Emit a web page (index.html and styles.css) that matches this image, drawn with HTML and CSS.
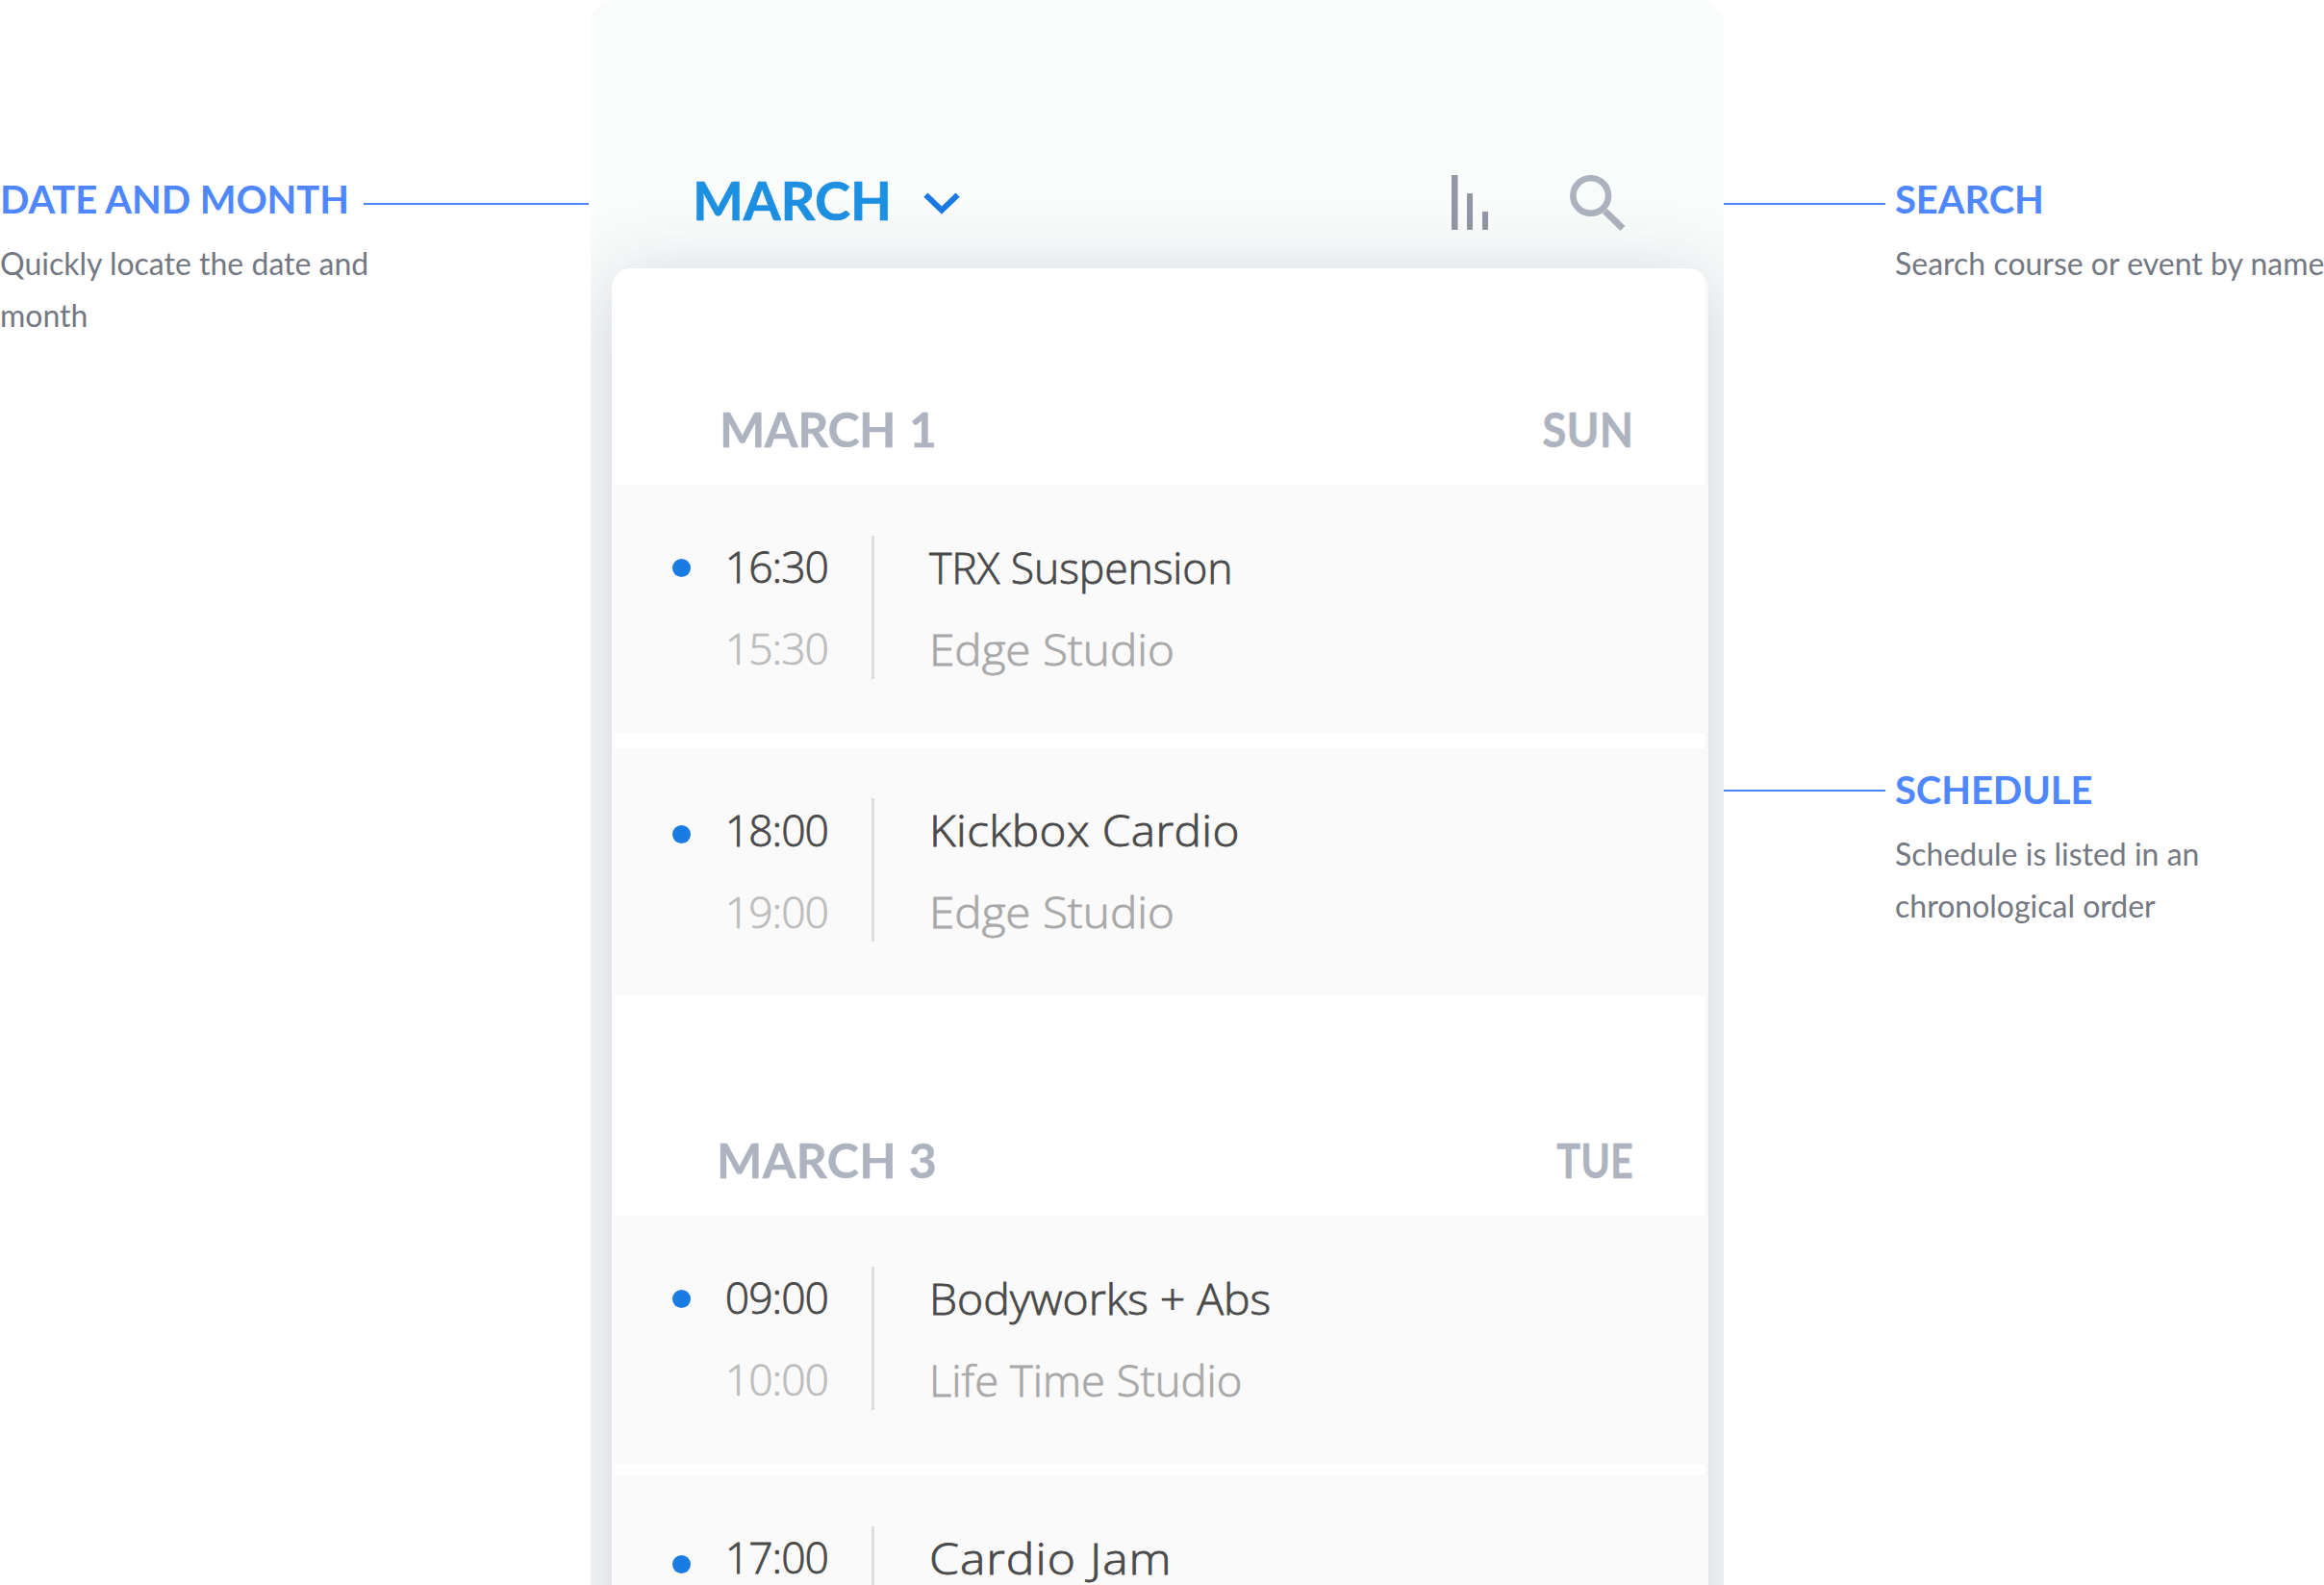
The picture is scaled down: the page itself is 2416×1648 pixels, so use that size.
FILE: index.html
```html
<!DOCTYPE html>
<html lang="en">
<head>
<meta charset="utf-8">
<title>Schedule</title>
<link rel="stylesheet" href="styles.css">
</head>
<body>
<main class="board">
  <aside class="notes notes-left">
    <section class="note">
      <div class="note-head"><h2 class="note-title">DATE AND MONTH</h2><span class="leader"></span></div>
      <p class="note-text">Quickly locate the date and month</p>
    </section>
  </aside>

  <div class="phone">
    <header class="topbar">
      <h1 class="month">MARCH</h1>
      <svg class="chevron" width="38" height="24" viewBox="0 0 38 24"><path d="M2.4 2.6 19 18.6 35.6 2.6" fill="none" stroke="#1b7ae2" stroke-width="6"/></svg>
      <svg class="bars" width="38" height="57" viewBox="0 0 38 57" fill="#9298a4"><path d="M0 0h6.5v57H0zM16 19h6v38h-6zM32 38h6v19h-6z"/></svg>
      <svg class="search" width="58" height="58" viewBox="0 0 58 58" fill="none" stroke="#acb3be"><circle cx="21.7" cy="21.5" r="18.3" stroke-width="6.6"/><path d="M36.5 37.5 55 55.5" stroke-width="7"/></svg>
    </header>

    <div class="card">
      <section class="day">
        <div class="day-head"><h3 class="day-date d1">MARCH 1</h3><span class="day-name sun">SUN</span></div>
        <div class="slots">
          <article class="slot">
            <i class="dot"></i>
            <div class="times"><span>16:30</span><span class="end">15:30</span></div>
            <i class="rule"></i>
            <div class="info"><span class="trx">TRX Suspension</span><span class="place edge">Edge Studio</span></div>
          </article>
          <article class="slot">
            <i class="dot low"></i>
            <div class="times"><span>18:00</span><span class="end">19:00</span></div>
            <i class="rule"></i>
            <div class="info"><span class="kick">Kickbox Cardio</span><span class="place edge">Edge Studio</span></div>
          </article>
        </div>
      </section>
      <section class="day">
        <div class="day-head"><h3 class="day-date d3">MARCH 3</h3><span class="day-name tue">TUE</span></div>
        <div class="slots tight">
          <article class="slot">
            <i class="dot"></i>
            <div class="times"><span>09:00</span><span class="end">10:00</span></div>
            <i class="rule"></i>
            <div class="info"><span class="body">Bodyworks + Abs</span><span class="place life">Life Time Studio</span></div>
          </article>
          <article class="slot">
            <i class="dot lower"></i>
            <div class="times"><span>17:00</span></div>
            <i class="rule"></i>
            <div class="info"><span class="jam">Cardio Jam</span></div>
          </article>
        </div>
      </section>
    </div>
  </div>

  <aside class="notes notes-right">
    <section class="note">
      <div class="note-head"><span class="leader"></span><h2 class="note-title">SEARCH</h2></div>
      <p class="note-text">Search course or event by name</p>
    </section>
    <section class="note note-schedule">
      <div class="note-head"><span class="leader"></span><h2 class="note-title">SCHEDULE</h2></div>
      <p class="note-text">Schedule is listed in an chronological order</p>
    </section>
  </aside>
</main>
</body>
</html>
```

FILE: styles.css
```css
* { box-sizing: border-box; margin: 0; padding: 0; }

body {
  background: #fff;
  font-family: Lato, sans-serif;
  overflow: hidden;
}

.board {
  display: grid;
  grid-template-columns: 614px 1178px 624px;
  height: 1648px;
  overflow: hidden;
}

/* Callouts */
.notes { padding-top: 183px; }
.note-head { display: flex; align-items: center; height: 48px; }
.note-title {
  font-size: 40px;
  line-height: 48px;
  font-weight: 700;
  letter-spacing: -.1px;
  color: #4e87ff;
  white-space: nowrap;
}
.note-text {
  margin-top: 16px;
  font-size: 32px;
  line-height: 54px;
  color: #737882;
}
.leader { height: 2px; background: #4c84fa; margin-top: 10px; }
.notes-left .leader { flex: 1; margin-left: 15px; margin-right: 2px; }
.notes-left .note-text { width: 400px; }
.notes-right .leader { width: 168px; margin-right: 10px; }
.notes-right .note-text { margin-left: 178px; white-space: nowrap; }
.note-schedule { margin-top: 496px; }
.note-schedule .leader { margin-top: 2px; }
.notes-right .note-schedule .note-text { width: 360px; white-space: normal; }

/* Phone */
.phone {
  display: flex;
  flex-direction: column;
  background: #fafcfb;
  border-radius: 24px 24px 0 0;
  overflow: hidden;
}
.topbar {
  flex: none;
  display: flex;
  align-items: flex-start;
  height: 279px;
  padding: 174px 0 0 106px;
}
.month {
  width: 239.5px;
  font-size: 56px;
  line-height: 67px;
  font-weight: 700;
  letter-spacing: -.1px;
  color: #1e90e2;
  -webkit-text-stroke: .6px;
}
.chevron { margin-top: 26px; }
.bars { margin: 8px 85px 0 511.5px; }
.search { margin-top: 8px; }

.card {
  flex: none;
  width: 1140px;
  height: 1500px;
  margin-left: 22px;
  border-right: 3px solid #f6f7f7;
  border-radius: 20px 20px 0 0;
  background: #fff;
  box-shadow: 0 11px 80px rgba(50, 54, 100, .22);
}
.day { padding-top: 137px; }
.day + .day { padding-top: 141px; }
.day-head {
  display: flex;
  justify-content: space-between;
  height: 88px;
  padding: 0 75px 0 112px;
  font-size: 50px;
  line-height: 60px;
  font-weight: 700;
  color: #adb4bf;
  -webkit-text-stroke: .4px;
}
.day-date { font-size: inherit; }
.d1 { letter-spacing: -.4px; word-spacing: 2px; }
.d3 { margin-left: -3px; letter-spacing: .4px; }
.day-name { transform-origin: 100% 50%; }
.sun { transform: scaleX(.92); }
.tue { transform: scaleX(.83); }

.slots { display: grid; gap: 16px; padding-left: 3px; margin-right: -3px; }
.slots.tight { gap: 12.5px; }
.slot {
  display: flex;
  align-items: flex-start;
  height: 257.5px;
  padding-top: 42px;
  background: #fafafa;
  font-family: "Open Sans", sans-serif;
  font-size: 44.5px;
  font-weight: 300;
  line-height: 85px;
  color: #4a4a4a;
  -webkit-text-stroke: .8px;
}
.dot {
  width: 19px;
  height: 19px;
  margin: 35px 0 0 59.5px;
  border-radius: 50%;
  background: #1a7be3;
}
.dot.low { margin-top: 38px; }
.dot.lower { margin-top: 41px; }
.times {
  display: flex;
  flex-direction: column;
  align-items: flex-end;
  width: 143.5px;
  letter-spacing: -1px;
}
.times .end { color: #bdbdbd; -webkit-text-stroke-width: .7px; }
.rule { width: 3px; height: 149px; margin: 10.5px 0 0 45px; background: #dedede; }
.info {
  display: flex;
  flex-direction: column;
  align-items: flex-start;
  margin: .5px 0 0 57px;
  white-space: nowrap;
}
.info span { transform-origin: 0 50%; }
.place { color: #a9a9a9; }
.trx { letter-spacing: -.1px; }
.kick { letter-spacing: .4px; transform: scaleX(1.07); }
.edge { transform: scaleX(1.07); }
.body { transform: scaleX(1.041); }
.life { transform: scaleX(1.02); }
.jam { letter-spacing: .9px; transform: scaleX(1.12); }
```
